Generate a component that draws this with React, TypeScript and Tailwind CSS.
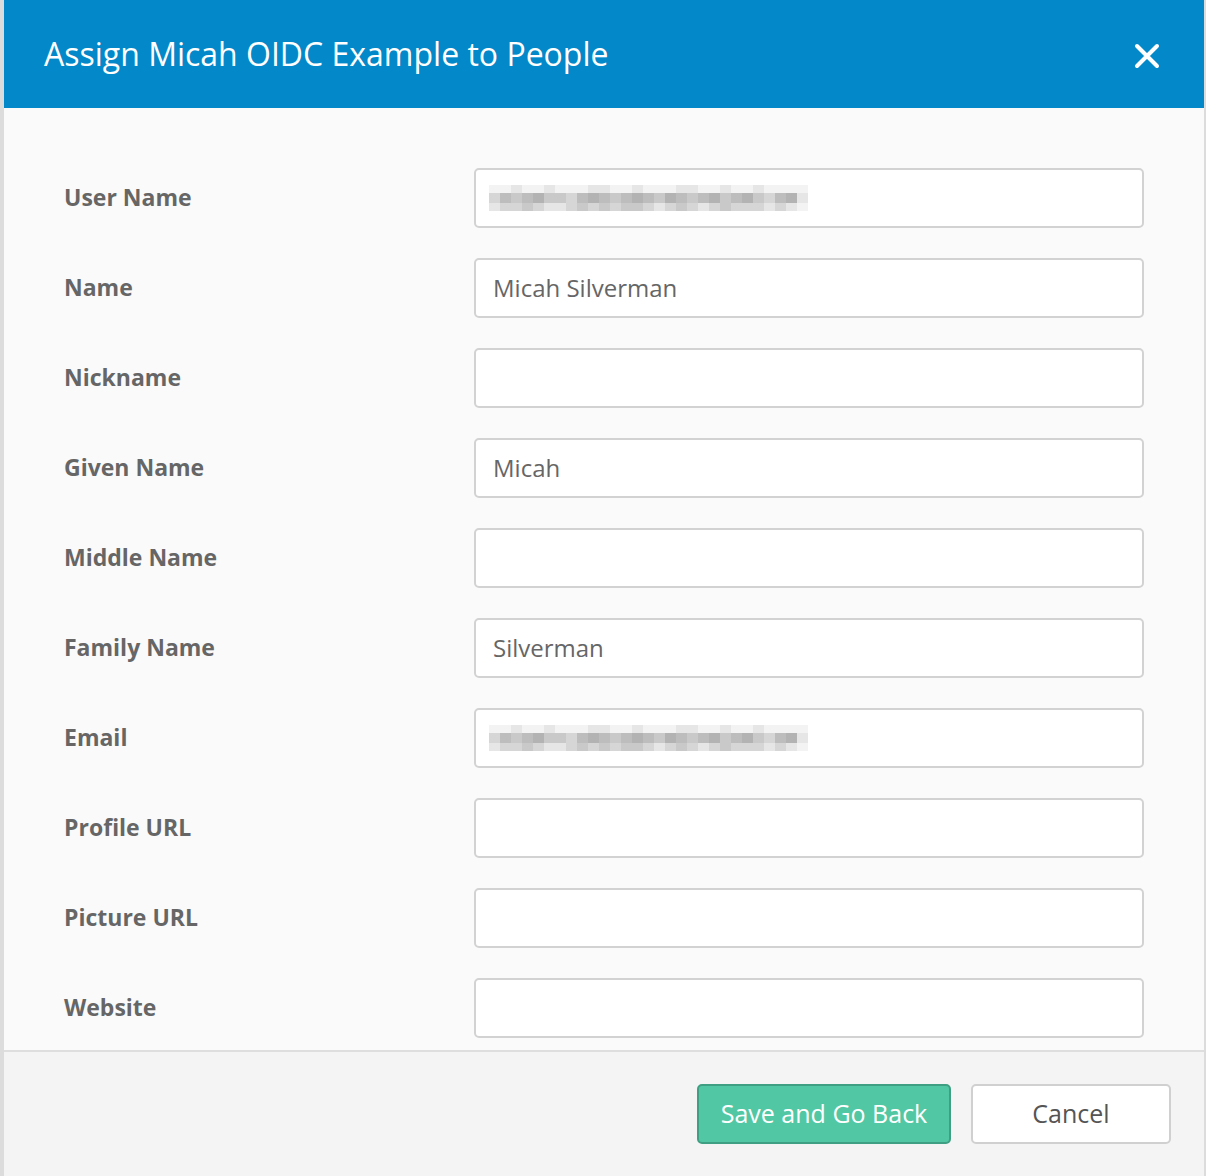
import React from "react";

const fields = [
  { label: "User Name", value: "", blurred: true },
  { label: "Name", value: "Micah Silverman" },
  { label: "Nickname", value: "" },
  { label: "Given Name", value: "Micah" },
  { label: "Middle Name", value: "" },
  { label: "Family Name", value: "Silverman" },
  { label: "Email", value: "", blurred: true },
  { label: "Profile URL", value: "" },
  { label: "Picture URL", value: "" },
  { label: "Website", value: "" },
];

const shades = [
  "bg-[#f3f3f3]",
  "bg-[#e6e6e6]",
  "bg-[#d6d6d6]",
  "bg-[#c9c9c9]",
  "bg-[#bdbdbd]",
  "bg-[#b3b3b3]",
];

// pixelated stand-in for the redacted text
const rows = [
  [0, 0, 1, 0, 0, 1, 0, 0, 0, 1, 1, 0, 0, 1, 0, 0, 0, 1, 1, 0, 0, 1, 0, 0, 1, 0, 0, 0, 0],
  [2, 4, 3, 4, 5, 3, 3, 2, 4, 5, 4, 3, 4, 5, 4, 3, 5, 4, 3, 4, 5, 3, 4, 5, 3, 2, 4, 5, 1],
  [1, 2, 2, 3, 2, 1, 1, 2, 3, 2, 3, 2, 3, 3, 2, 1, 2, 3, 2, 1, 2, 3, 2, 2, 2, 1, 2, 1, 0],
];

function Pixelated() {
  return (
    <div className="flex flex-col">
      {rows.map((row, i) => (
        <div key={i} className={i === 1 ? "flex h-[10px]" : "flex h-[8px]"}>
          {row.map((s, j) => (
            <div key={j} className={`w-[11px] ${shades[s]}`} />
          ))}
        </div>
      ))}
    </div>
  );
}

export default function App() {
  return (
    <div
      className="h-[1176px] w-[1206px] overflow-hidden bg-[#dcdcdc] pl-[4px] pr-[2px]"
      style={{ fontFamily: "'Open Sans', Lato, sans-serif" }}
    >
      <div className="flex h-full flex-col bg-[#fafafa]">
        <div className="flex h-[108px] items-center justify-between bg-[#0388c9] pl-[40px] pr-[44px]">
          <h1 className="text-[32px] font-normal text-white">
            Assign Micah OIDC Example to People
          </h1>
          <svg width="26" height="26" viewBox="0 0 26 26" className="mt-[4px]">
            <path
              d="M3 3 L23 23 M23 3 L3 23"
              stroke="white"
              strokeWidth="4"
              strokeLinecap="round"
            />
          </svg>
        </div>

        <div className="flex flex-col gap-[30px] px-[60px] pt-[60px] pb-[12px]">
          {fields.map((f) => (
            <div key={f.label} className="flex items-center">
              <label className="w-[410px] text-[23px] font-bold text-[#666] -mt-[1px]">
                {f.label}
              </label>
              <div className="flex h-[60px] w-[670px] items-center rounded-[5px] border-2 border-[#d2d2d2] bg-white px-[17px]">
                {f.blurred ? (
                  <div className="-ml-[4px]">
                    <Pixelated />
                  </div>
                ) : (
                  <span className="text-[24px] text-[#666] -mt-[1px]">{f.value}</span>
                )}
              </div>
            </div>
          ))}
        </div>

        <div className="flex flex-1 justify-end gap-[20px] border-t-2 border-[#dedede] bg-[#f4f4f4] pr-[33px] pt-[32px]">
          <button className="h-[60px] w-[254px] rounded-[5px] border-2 border-[#3f9f82] bg-[#52c7a4] text-[25px] text-white">
            Save and Go Back
          </button>
          <button className="h-[60px] w-[200px] rounded-[5px] border-2 border-[#d0d0d0] bg-white text-[25px] text-[#555]">
            Cancel
          </button>
        </div>
      </div>
    </div>
  );
}
